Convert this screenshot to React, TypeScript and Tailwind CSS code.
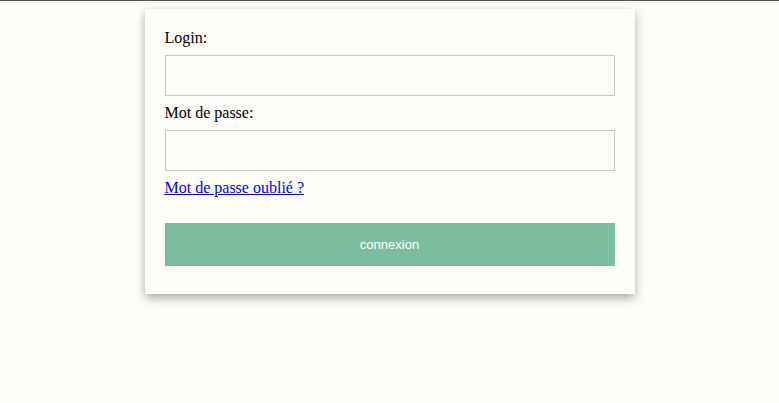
export default function App() {
  return (
    <div className="min-h-[403px] w-full bg-[#fefefa] border-t border-[#555555]">
      <div className="flex justify-center pt-2">
        <form className="w-[490px] bg-[#fefefa] px-5 pt-5 pb-[28px] shadow-[0_4px_10px_rgba(0,0,0,0.35)] font-['Liberation_Serif',serif] text-[16px] leading-[18px] text-black">
          <label className="block">Login:</label>
          <input type="text" className="mt-2 block h-[41px] w-full border border-[#c8c8c8] bg-[#fefefa] outline-none" />
          <label className="mt-2 block">Mot de passe:</label>
          <input type="password" className="mt-2 block h-[41px] w-full border border-[#c8c8c8] bg-[#fefefa] outline-none" />
          <a href="#" className="mt-2 inline-block text-[#0000ee] underline">Mot de passe oublié ?</a>
          <button type="button" className="mt-[26px] block h-[43px] w-full bg-[#7bbd9d] font-['Liberation_Sans',sans-serif] text-[13px] text-white">
            connexion
          </button>
        </form>
      </div>
    </div>
  );
}
